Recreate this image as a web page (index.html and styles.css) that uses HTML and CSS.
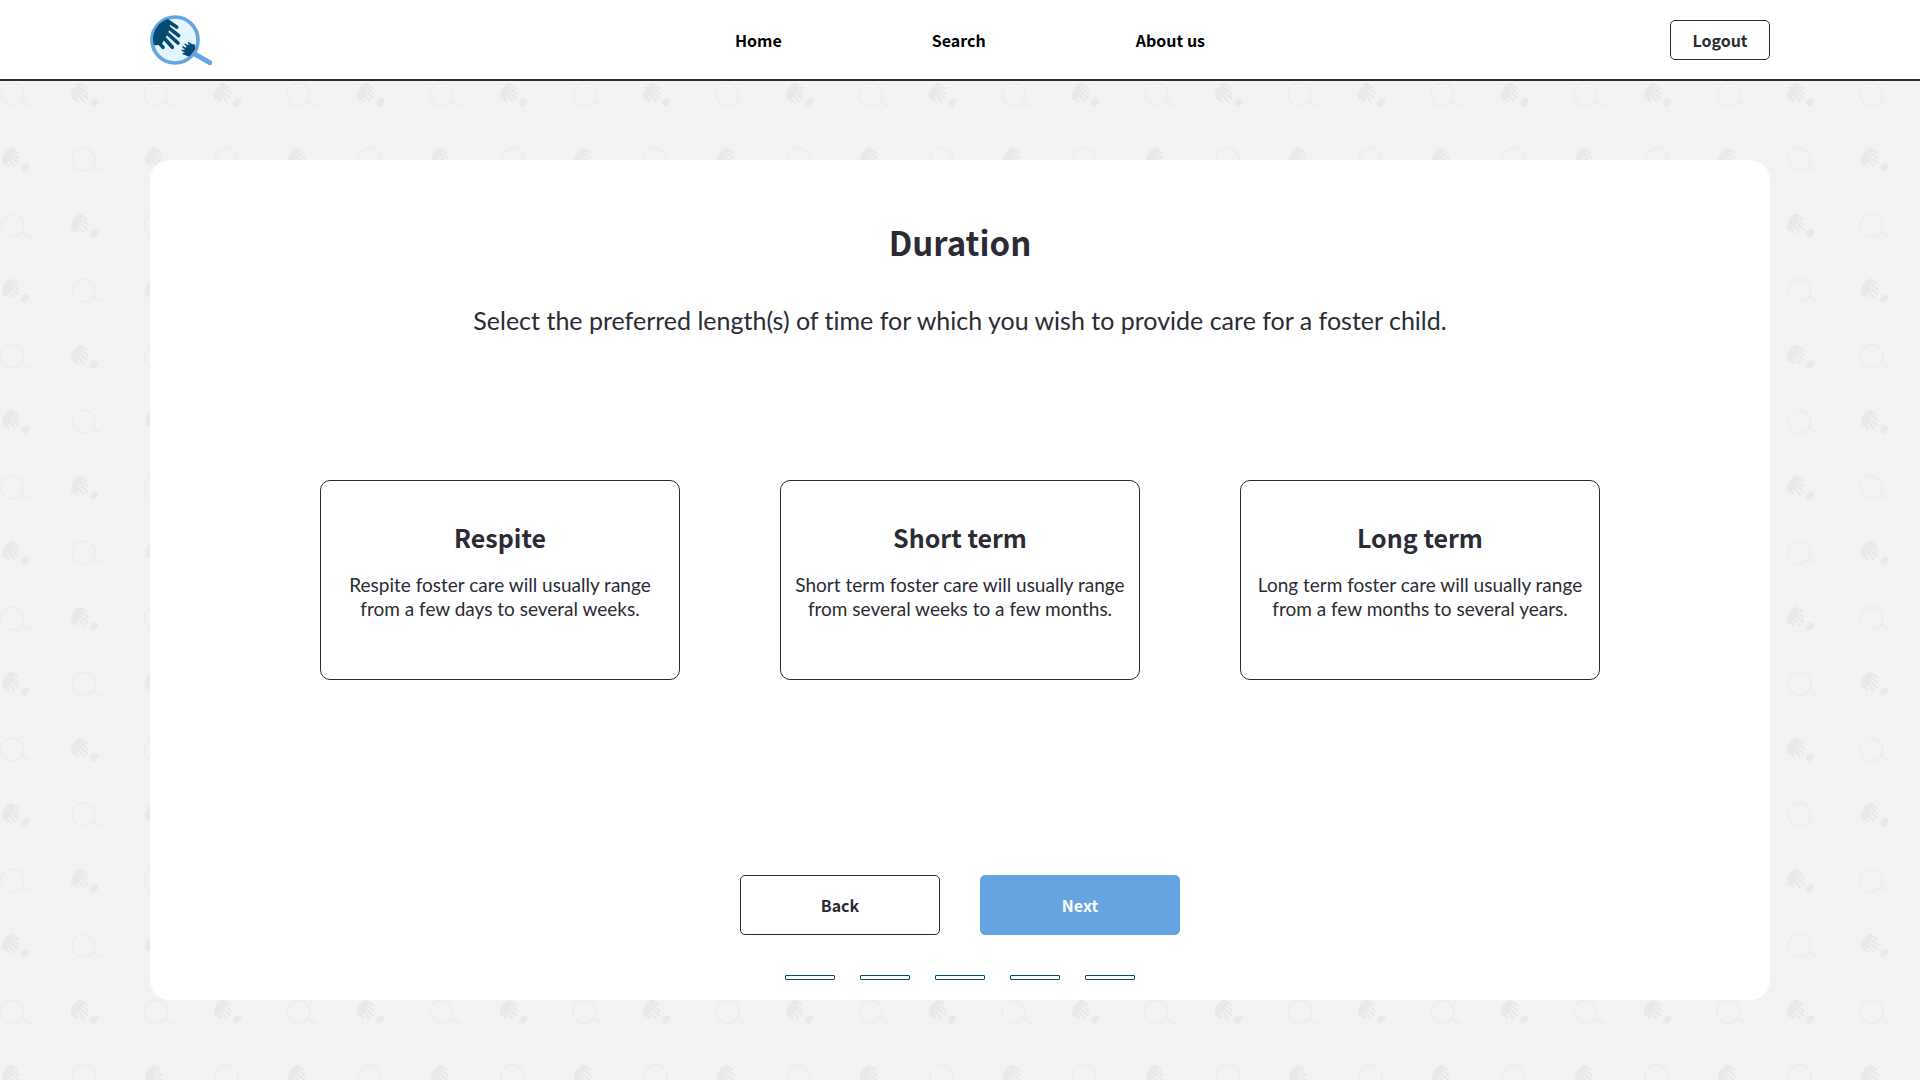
FILE: index.html
```html
<!DOCTYPE html>
<html lang="en">
<head>
  <meta charset="utf-8">
  <meta name="viewport" content="width=device-width, initial-scale=1">
  <title>Duration</title>
  <link rel="stylesheet" href="styles.css">
</head>
<body>
  <header class="header">
    <a class="logo" href="#" aria-label="Home page">
      <svg class="logo-mark" viewBox="0 0 186 150" aria-hidden="true">
        <path d="M132 116L179 143" fill="none" stroke="#64a4e1" stroke-width="15" stroke-linecap="round"/>
        <circle cx="75" cy="75" r="69" fill="#e3f6fe" stroke="#64a4e1" stroke-width="11"/>
        <g fill="none" stroke="#054b70" stroke-linecap="round" stroke-linejoin="round">
          <path d="M54 15C36 20 18 38 14 58C11 70 12 81 15 88L32 86L44 68L54 46L58 24Z" fill="#054b70" stroke-width="6"/>
          <path d="M54 19L80 36M52 35L86 62M44 48L84 84M36 62L67 97M22 78L39 97" stroke-width="11"/>
          <path d="M114 92L132 90L133 102L117 122L110 119L104 108Z" fill="#054b70" stroke-width="5"/>
          <path d="M116 84L129 92M106 88L120 98M99 96L112 104M97 106L109 112M100 116L111 119" stroke-width="5"/>
        </g>
      </svg>
    </a>
    <nav aria-label="Main">
      <ul class="nav-list">
        <li><a class="nav-link" href="#">Home</a></li>
        <li><a class="nav-link" href="#">Search</a></li>
        <li><a class="nav-link" href="#">About us</a></li>
      </ul>
    </nav>
    <button class="button button-small" type="button">Logout</button>
  </header>

  <main class="main">
    <section class="panel">
      <h1 class="title">Duration</h1>
      <p class="intro">Select the preferred length(s) of time for which you wish to provide care for a foster child.</p>

      <div class="options">
        <button class="option" type="button" aria-pressed="false">
          <span class="option-title">Respite</span>
          <span class="option-text">Respite foster care will usually range<br>from a few days to several weeks.</span>
        </button>
        <button class="option" type="button" aria-pressed="false">
          <span class="option-title">Short term</span>
          <span class="option-text">Short term foster care will usually range<br>from several weeks to a few months.</span>
        </button>
        <button class="option" type="button" aria-pressed="false">
          <span class="option-title">Long term</span>
          <span class="option-text">Long term foster care will usually range<br>from a few months to several years.</span>
        </button>
      </div>

      <div class="actions">
        <button class="button" type="button">Back</button>
        <button class="button button-primary" type="button">Next</button>
      </div>

      <ol class="steps" aria-label="Progress">
        <li class="step"></li>
        <li class="step"></li>
        <li class="step"></li>
        <li class="step"></li>
        <li class="step"></li>
      </ol>
    </section>
  </main>
</body>
</html>
```
FILE: styles.css
```css
:root {
  --ink: #2a2b35;
  --blue: #64a4e1;
  --navy: #054b70;
  --heading-font: "Noto Sans CJK SC", "Noto Sans", sans-serif;
  --body-font: Lato, "Open Sans", sans-serif;
}

* {
  box-sizing: border-box;
}

body {
  margin: 0;
  min-height: 100vh;
  display: flex;
  flex-direction: column;
  color: var(--ink);
  font-family: var(--body-font);
  font-variant-ligatures: none;
}

.header {
  display: flex;
  align-items: center;
  justify-content: space-between;
  padding: 15px 150px 14px;
  background: #fff;
  border-bottom: 2px solid var(--ink);
}

.logo {
  width: 120px;
}

.logo-mark {
  display: block;
  width: 62px;
  height: 50px;
}

.nav-list {
  display: flex;
  gap: 150px;
  margin: 0;
  padding: 0;
  list-style: none;
}

.nav-link {
  color: #000;
  font: 700 16px/24px var(--heading-font);
  text-decoration: none;
}

.button {
  width: 200px;
  height: 60px;
  padding: 0;
  border: 1px solid var(--ink);
  border-radius: 5px;
  background: #fff;
  color: var(--ink);
  font: 700 16px/24px var(--heading-font);
}

.button-small {
  width: 100px;
  height: 40px;
}

.button-primary {
  border-color: var(--blue);
  background: var(--blue);
  color: #fff;
}

.main {
  flex: 1;
  display: flex;
  padding: 79px 150px 80px;
  background-color: #f3f3f3;
  background-image: url("data:image/svg+xml,%3Csvg xmlns='http://www.w3.org/2000/svg' xmlns:xlink='http://www.w3.org/1999/xlink' width='143' height='131'%3E%3Cdefs%3E%3Cg id='g' transform='scale(.166)' fill='none' stroke='%23eeeeee' stroke-linecap='round'%3E%3Cpath d='M132 116L179 143' stroke-width='15'/%3E%3Ccircle cx='75' cy='75' r='69' stroke-width='11'/%3E%3C/g%3E%3Cg id='h' transform='scale(.216)' fill='none' stroke='%23e9e9e9' stroke-linecap='round' stroke-linejoin='round'%3E%3Cpath d='M54 15C36 20 18 38 14 58C11 70 12 81 15 88L32 86L44 68L54 46L58 24Z' fill='%23e9e9e9' stroke-width='6'/%3E%3Cpath d='M54 19L80 36M52 35L86 62M44 48L84 84M36 62L67 97M22 78L39 97' stroke-width='11'/%3E%3Cpath d='M114 92L132 90L133 102L117 122L110 119L104 108Z' fill='%23e9e9e9' stroke-width='5'/%3E%3Cpath d='M116 84L129 92M106 88L120 98M99 96L112 104M97 106L109 112M100 116L111 119' stroke-width='5'/%3E%3C/g%3E%3C/defs%3E%3Cuse xlink:href='%23g' y='1'/%3E%3Cuse xlink:href='%23h' x='69' y='-1'/%3E%3Cuse xlink:href='%23h' y='64'/%3E%3Cuse xlink:href='%23g' x='71' y='66'/%3E%3C/svg%3E");
}

.panel {
  flex: 1;
  display: flex;
  flex-direction: column;
  align-items: center;
  padding: 58px 20px 20px;
  border-radius: 20px;
  background: #fff;
}

.title {
  margin: 0;
  font: 700 33px/48px var(--heading-font);
}

.intro {
  margin: 38px 0 0;
  font-size: 25px;
  line-height: 32px;
  text-align: center;
}

.options {
  display: flex;
  flex-wrap: wrap;
  justify-content: center;
  gap: 100px;
  margin: 144px 0 40px;
}

.option {
  display: flex;
  flex-direction: column;
  align-items: center;
  gap: 17px;
  width: 360px;
  height: 200px;
  padding: 37px 10px;
  border: 1px solid var(--ink);
  border-radius: 10px;
  background: #fff;
  color: var(--ink);
}

.option-title {
  font: 700 25px/38px var(--heading-font);
}

.option-text {
  font: 400 19px/24px var(--body-font);
  white-space: nowrap;
}

.actions {
  display: flex;
  gap: 40px;
  margin-top: auto;
}

.steps {
  display: flex;
  gap: 25px;
  margin: 40px 0 0;
  padding: 0;
  list-style: none;
}

.step {
  width: 50px;
  height: 5px;
  border: 1px solid var(--navy);
  border-radius: 1px;
}
```
